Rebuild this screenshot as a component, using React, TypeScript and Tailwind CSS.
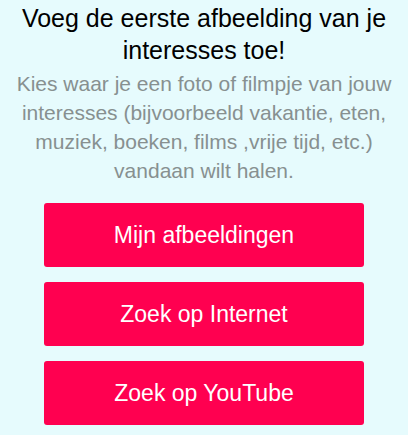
export default function App() {
  const buttons = ['Mijn afbeeldingen', 'Zoek op Internet', 'Zoek op YouTube'];

  return (
    <div className="min-h-[435px] bg-[#e6fbfd] flex flex-col items-center font-['Liberation_Sans',Arial,sans-serif]">
      <h1 className="mt-[2px] px-2 text-center text-[25px] leading-[32px] text-black">
        Voeg de eerste afbeelding van je interesses toe!
      </h1>
      <p className="mt-[3px] px-3 text-center text-[21px] leading-[29px] text-[#879090]">
        Kies waar je een foto of filmpje van jouw interesses (bijvoorbeeld vakantie, eten, muziek, boeken, films ,vrije tijd, etc.) vandaan wilt halen.
      </p>
      <div className="mt-[18px] flex flex-col gap-[15px]">
        {buttons.map((label) => (
          <button
            key={label}
            className="w-[320px] h-[64px] rounded-[3px] bg-[#ff0050] text-white text-[23px]"
          >
            {label}
          </button>
        ))}
      </div>
    </div>
  );
}
